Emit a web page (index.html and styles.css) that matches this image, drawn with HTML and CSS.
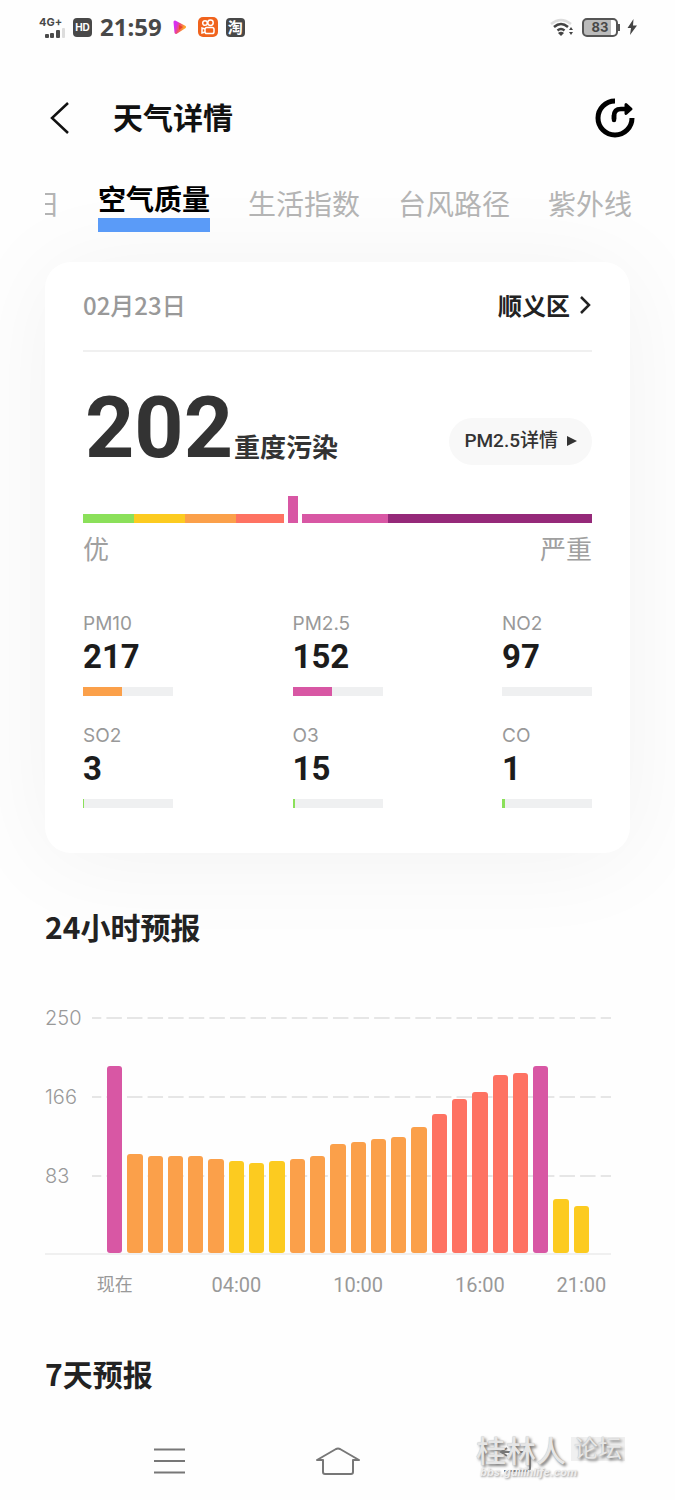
FILE: index.html
```html
<!DOCTYPE html>
<html lang="zh-CN">
<head>
<meta charset="utf-8">
<meta name="viewport" content="width=device-width, initial-scale=1">
<title>天气详情</title>
<link rel="stylesheet" href="styles.css">
</head>
<body>
<div class="status">
  <div class="status-group">
    <div class="signal">
      <span class="signal-type">4G+</span>
      <svg width="24" height="10" viewBox="0 0 24 10"><g fill="#4a4a4a"><rect x="1" y="6" width="4" height="4" rx="1"/><rect x="6" y="5" width="4" height="5" rx="1"/><rect x="12" y="2" width="4" height="8" rx="1"/></g><rect x="18" y="0" width="3" height="10" rx="1" fill="#ddd"/></svg>
    </div>
    <span class="hd">HD</span>
    <span class="clock">21:59</span>
    <svg class="app" width="20" height="20" viewBox="0 0 20 20"><defs><linearGradient id="play" x1="0" y1="0" x2="1" y2="0.4"><stop offset="0.2" stop-color="#d62ff0"/><stop offset="0.55" stop-color="#f0506b"/><stop offset="1" stop-color="#fda32b"/></linearGradient></defs><path d="M5 5 14.500 10 6 15.500Z" fill="url(#play)" stroke="url(#play)" stroke-width="3" stroke-linejoin="round"/><path d="m9 8 4 2-4 3z" fill="#e8472b"/></svg>
    <svg class="app" width="20" height="20" viewBox="0 0 20 20"><rect width="20" height="20" rx="5" fill="#f0631d"/><g fill="none" stroke="#fff" stroke-width="1.500"><circle cx="7" cy="6" r="2.300"/><circle cx="12.500" cy="5.800" r="2.700"/><rect x="7" y="10.500" width="9" height="6" rx="1.800"/><path d="m7 12-3-1v5l3-1"/></g></svg>
    <span class="app taobao">淘</span>
  </div>
  <div class="status-group right">
    <svg width="24" height="20" viewBox="0 0 24 20"><g fill="none" stroke-width="2.500"><path d="M1 7q10-8 20 0" stroke="#ddd"/><path d="M4 10q7-6 14 0M7.500 13.500q3.500-3 7 0" stroke="#444"/></g><path d="m11 19-3-3q3-2.500 6 0z" fill="#444"/><path d="m19 13 2-3 2 3zM19 15l2 3 2-3z" fill="#444"/></svg>
    <span class="battery">83</span>
    <svg width="12" height="18" viewBox="0 0 12 18"><path d="M7.500 1 1.500 10H5L4 17l7-9.500H7z" fill="#444"/></svg>
  </div>
</div>

<header class="header">
  <button class="icon-button" aria-label="返回"><svg width="24" height="32" viewBox="0 0 24 32"><path d="M21 1 5 16l16 15" fill="none" stroke="#111" stroke-width="2.500"/></svg></button>
  <h1 class="title">天气详情</h1>
  <button class="icon-button share" aria-label="分享"><svg width="40" height="40" viewBox="0 0 40 40"><g fill="none" stroke="#000" stroke-width="5"><path d="M20 3A17 17 0 1 0 37 20"/><path d="M19 21V18q0-7 7-7h5" stroke-width="4.500"/><path d="M19 17v5" stroke-width="4.500" stroke-linecap="round"/></g><path d="M31 6.500 36 11 31 15.500Z" fill="#000" stroke="#000" stroke-width="3" stroke-linejoin="round"/></svg></button>
</header>

<nav class="tabs">
  <button class="tab tab-cut"><span>日</span></button>
  <button class="tab active">空气质量</button>
  <button class="tab">生活指数</button>
  <button class="tab">台风路径</button>
  <button class="tab">紫外线</button>
</nav>

<main class="main">
  <section class="card">
    <div class="card-head">
      <span class="date">02月23日</span>
      <button class="place">顺义区<svg width="12" height="20" viewBox="0 0 12 20"><path d="m1 2 8 8-8 8" fill="none" stroke="#222" stroke-width="2.500"/></svg></button>
    </div>
    <div class="summary">
      <div class="reading"><span class="aqi">202</span><span class="level">重度污染</span></div>
      <button class="pill">PM2.5详情<svg width="10" height="10" viewBox="0 0 10 10"><path d="M0 0 10 5 0 10Z" fill="#333"/></svg></button>
    </div>
    <div class="scale">
      <i class="seg green"></i><i class="seg yellow"></i><i class="seg orange"></i><i class="seg red"></i><i class="seg pink wide"></i><i class="seg purple widest"></i>
      <i class="marker"></i>
    </div>
    <div class="scale-labels"><span>优</span><span>严重</span></div>
    <div class="metrics">
      <div class="metric"><span class="name">PM10</span><strong class="value">217</strong><div class="track"><div class="orange" style="width:43%"></div></div></div>
      <div class="metric"><span class="name">PM2.5</span><strong class="value">152</strong><div class="track"><div class="pink" style="width:44%"></div></div></div>
      <div class="metric"><span class="name">NO2</span><strong class="value">97</strong><div class="track"></div></div>
      <div class="metric"><span class="name">SO2</span><strong class="value">3</strong><div class="track"><div class="green" style="width:1%"></div></div></div>
      <div class="metric"><span class="name">O3</span><strong class="value">15</strong><div class="track"><div class="green" style="width:3%"></div></div></div>
      <div class="metric"><span class="name">CO</span><strong class="value">1</strong><div class="track"><div class="green" style="width:3%"></div></div></div>
    </div>
  </section>

  <h2 class="heading">24小时预报</h2>
  <section class="chart">
    <div class="plot">
      <div class="rows">
        <div class="row"><span>250</span><svg class="dash" height="2" width="100%"><line x1="0" y1="1" x2="100%" y2="1" pathLength="504"/></svg></div>
        <div class="row"><span>166</span><svg class="dash" height="2" width="100%"><line x1="0" y1="1" x2="100%" y2="1" pathLength="504"/></svg></div>
        <div class="row"><span>83</span><svg class="dash" height="2" width="100%"><line x1="0" y1="1" x2="100%" y2="1" pathLength="504"/></svg></div>
      </div>
      <div class="columns bars">
        <i class="pink" style="height:79.5%"></i>
        <i class="orange" style="height:42.2%"></i>
        <i class="orange" style="height:41.3%"></i>
        <i class="orange" style="height:41.3%"></i>
        <i class="orange" style="height:41.3%"></i>
        <i class="orange" style="height:40%"></i>
        <i class="yellow" style="height:39.2%"></i>
        <i class="yellow" style="height:38.3%"></i>
        <i class="yellow" style="height:39.2%"></i>
        <i class="orange" style="height:40%"></i>
        <i class="orange" style="height:41.3%"></i>
        <i class="orange" style="height:46.4%"></i>
        <i class="orange" style="height:47.2%"></i>
        <i class="orange" style="height:48.5%"></i>
        <i class="orange" style="height:49.4%"></i>
        <i class="orange" style="height:53.6%"></i>
        <i class="red" style="height:59.2%"></i>
        <i class="red" style="height:65.6%"></i>
        <i class="red" style="height:68.5%"></i>
        <i class="red" style="height:75.8%"></i>
        <i class="red" style="height:76.6%"></i>
        <i class="pink" style="height:79.5%"></i>
        <i class="yellow" style="height:23%"></i>
        <i class="yellow" style="height:20%"></i>
      </div>
    </div>
    <div class="columns hours">
      <span style="grid-column:1">现在</span>
      <span style="grid-column:7">04:00</span>
      <span style="grid-column:13">10:00</span>
      <span style="grid-column:19">16:00</span>
      <span style="grid-column:24">21:00</span>
    </div>
  </section>
  <h2 class="heading week">7天预报</h2>
</main>

<footer class="system-nav">
  <button class="icon-button" aria-label="最近任务"><svg width="32" height="28" viewBox="0 0 32 28"><path d="M0 2.500H31M0 14H31M0 25.500H31" stroke="#777" stroke-width="2"/></svg></button>
  <button class="icon-button" aria-label="主页"><svg width="46" height="30" viewBox="0 0 46 30"><path d="M2 14 21 3q2-1 4 0l19 11H38v12q0 2-2 2H10q-2 0-2-2V14z" fill="none" stroke="#777" stroke-width="2" stroke-linejoin="round"/></svg></button>
  <button class="icon-button" aria-label="后退"><svg width="42" height="28" viewBox="0 0 42 28"><path d="M17 1 11 5l6 4M12 5h24q4 0 4 4v12q0 3-3 3H14" fill="none" stroke="#777" stroke-width="2"/></svg></button>
  <div class="watermark">
    <div class="mark-top"><span class="mark-name">桂林人</span><span class="mark-forum">论坛</span></div>
    <span class="mark-url">bbs.guilinlife.com</span>
  </div>
</footer>
</body>
</html>
```
FILE: styles.css
```css
* { box-sizing: border-box; }
body {
  margin: 0;
  min-height: 100vh;
  display: flex;
  flex-direction: column;
  background: #fefefe;
  color: #222;
  font-family: Inter, "Noto Sans CJK SC", sans-serif;
  font-size: 20px;
}
button {
  margin: 0;
  padding: 0;
  border: 0;
  background: none;
  color: inherit;
  font: inherit;
}
svg { display: block; flex: none; }
h1, h2 { margin: 0; }

.green { background: #8be05a; }
.yellow { background: #fccb20; }
.orange { background: #fba04a; }
.red { background: #fe7262; }
.pink { background: #d857a4; }
.purple { background: #952979; }

.status {
  display: flex;
  justify-content: space-between;
  height: 54px;
  padding: 0 37px 0 39px;
}
.status-group { display: flex; align-items: center; gap: 8px; color: #484848; }
.signal { display: flex; flex-direction: column; width: 26px; padding-left: 5px; }
.signal-type {
  margin-left: -5px;
  font-size: 11px;
  font-weight: 700;
  line-height: 11px;
}
.hd {
  width: 19px;
  height: 19px;
  border-radius: 4px;
  background: #484848;
  color: #fff;
  font-size: 10px;
  font-weight: 700;
  line-height: 19px;
  text-align: center;
}
.clock { font: 700 24px/34px "Noto Sans", sans-serif; }
.taobao {
  width: 19px;
  height: 19px;
  border-radius: 4px;
  background: #484848;
  color: #fff;
  font-size: 15px;
  font-weight: 700;
  line-height: 19px;
  text-align: center;
}
.battery {
  position: relative;
  width: 36px;
  height: 19px;
  border: 2px solid #555;
  border-radius: 5px;
  background: linear-gradient(90deg, #bbb 83%, #fff 83%);
  font-size: 13px;
  font-weight: 700;
  line-height: 15px;
  text-align: center;
}
.battery::after {
  content: "";
  position: absolute;
  top: 4px;
  right: -4px;
  width: 2px;
  height: 7px;
  background: #555;
}

.header {
  display: flex;
  align-items: center;
  height: 128px;
  padding: 0 40px 0 47px;
}
.title {
  flex: 1;
  padding-left: 42px;
  color: #111;
  font-size: 30px;
  font-weight: 700;
  line-height: 40px;
}

.tabs {
  position: relative;
  z-index: 1;
  display: flex;
  gap: 38px;
  height: 52px;
  padding: 0 43px 0 45px;
  color: #b4b4b4;
  font-size: 28px;
  line-height: 46px;
}
.tab { flex: none; display: flex; height: 46px; }
.tab-cut { width: 15px; justify-content: flex-end; overflow: hidden; }
.active {
  height: 50px;
  border-bottom: 14px solid #5a9bf8;
  color: #000;
  font-weight: 700;
  line-height: 36px;
}

.main { padding: 28px 45px 0; }
.card {
  padding: 0 38px 45px;
  border-radius: 26px;
  background: #fff;
  box-shadow: 0 6px 100px rgba(0, 0, 0, 0.05);
}
.card-head {
  display: flex;
  justify-content: space-between;
  align-items: center;
  height: 90px;
  padding-bottom: 3px;
  border-bottom: 2px solid #f0f0f0;
}
.date {
  color: #999;
  font-family: "Noto Sans CJK SC", sans-serif;
  font-size: 24px;
  font-weight: 500;
}
.place { display: flex; align-items: center; gap: 10px; color: #222; font-size: 24px; font-weight: 700; }
.summary {
  display: flex;
  justify-content: space-between;
  align-items: center;
  height: 144px;
}
.reading { display: flex; align-items: baseline; padding-top: 7px; color: #333; }
.aqi { width: 151px; padding-left: 2px; font: 700 86px/104px Roboto, sans-serif; }
.level { font-size: 26px; font-weight: 700; line-height: 36px; }
.pill {
  display: flex;
  align-items: center;
  gap: 9px;
  height: 47px;
  margin-top: 34px;
  padding: 0 15px;
  border-radius: 24px;
  background: #f8f8f8;
  color: #333;
  font: 500 19px/24px Roboto, "Noto Sans CJK SC", sans-serif;
}
.scale {
  position: relative;
  display: flex;
  align-items: flex-end;
  height: 27px;
}
.seg { flex: 1; height: 9px; }
.wide { flex: 2; }
.widest { flex: 4; }
.marker {
  position: absolute;
  bottom: 0;
  left: 39.5%;
  width: 18px;
  height: 27px;
  border: solid #fff;
  border-width: 0 4px;
  background: #d857a4;
}
.scale-labels {
  display: flex;
  justify-content: space-between;
  padding-top: 9px;
  color: #a0a0a0;
  font-size: 26px;
  line-height: 36px;
}
.metrics {
  display: grid;
  grid-template-columns: repeat(3, 90px);
  justify-content: space-between;
  row-gap: 28px;
  padding-top: 44px;
}
.metric { display: flex; flex-direction: column; }
.name { color: #999; font-size: 19px; line-height: 24px; }
.value { color: #1c1c1c; font: 700 33px/41px Roboto, sans-serif; }
.track { height: 9px; margin-top: 10px; background: #eff0f1; }
.track div { height: 9px; }

.heading {
  padding-top: 53px;
  font-family: "Noto Sans CJK SC", sans-serif;
  font-size: 30px;
  font-weight: 700;
  line-height: 40px;
}
.chart { padding: 60px 19px 0 0; }
.plot { display: grid; border-bottom: 2px solid #f0f0f0; }
.rows { grid-area: 1 / 1; display: flex; flex-direction: column; gap: 55px; padding-bottom: 65px; }
.row {
  display: grid;
  grid-template-columns: 47px minmax(0, 1fr);
  align-items: center;
  height: 24px;
  color: #999;
  font-size: 20px;
  font-weight: 300;
}
.dash line { stroke: #e6e6e6; stroke-width: 2; stroke-dasharray: 15 5; stroke-dashoffset: 6; }
.columns {
  display: grid;
  grid-template-columns: repeat(24, minmax(0, 1fr));
  column-gap: 5px;
  margin: 0 22px 0 62px;
}
.bars { grid-area: 1 / 1; align-self: end; align-items: end; height: 235px; }
.bars i { border-radius: 3px; }
.hours {
  padding-top: 18px;
  color: #999;
  font-family: Roboto, "Noto Sans CJK SC", sans-serif;
  font-size: 20px;
  line-height: 24px;
}
.hours span { justify-self: center; white-space: nowrap; }
.hours span:first-child { font-size: 18px; }
.week { padding-top: 56px; }

.system-nav {
  position: relative;
  display: flex;
  justify-content: space-between;
  align-items: center;
  height: 78px;
  margin-top: auto;
  padding: 0 143px 0 154px;
}
.watermark {
  position: absolute;
  top: 11px;
  right: 50px;
  color: #e6e6e6;
  text-shadow: 2px 2px 3px #777, 0 0 1px #bbb;
}
.mark-top { display: flex; align-items: center; gap: 5px; }
.mark-name { font: 500 30px/32px "Noto Sans CJK SC", sans-serif; }
.mark-forum { padding: 0 3px; background: #f0f0f0; font-size: 24px; font-weight: 400; line-height: 24px; }
.mark-url {
  display: block;
  padding-left: 4px;
  color: #eee;
  font-size: 11px;
  font-style: italic;
  font-weight: 700;
  line-height: 14px;
  text-shadow: 1px 1px 2px #999;
}
```
